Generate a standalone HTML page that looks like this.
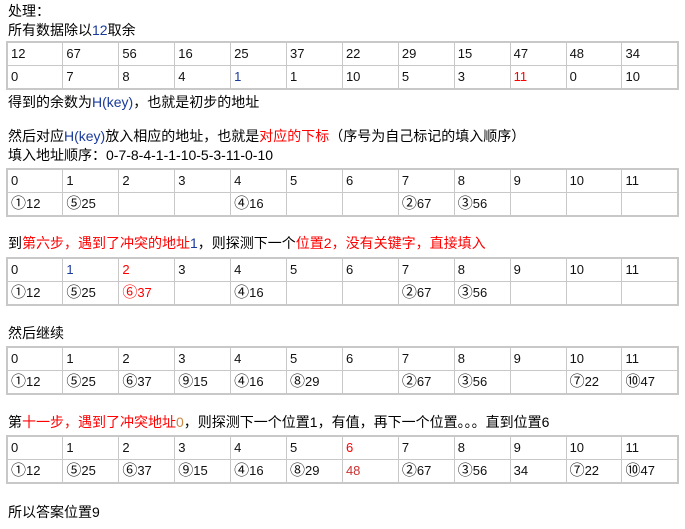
<!DOCTYPE html>
<html><head><meta charset="utf-8"><style>
body{margin:0;background:#fff;width:685px;height:529px;position:relative;overflow:hidden;font-family:"Liberation Sans","Noto Sans CJK SC",sans-serif;font-size:14px;color:#000}
.t{position:absolute;left:8px;white-space:nowrap;line-height:19px}
table{position:absolute;left:6px;border-collapse:collapse;width:673px;table-layout:fixed;border:2px solid #c8c8c8}
td{border:1px solid #c8c8c8;height:22px;padding:0 0 0 3px;font-size:13px;line-height:22px;color:#111}
.c{font-family:"WenQuanYi Zen Hei","Noto Sans CJK SC",sans-serif;font-size:15px;line-height:10px}
.r{color:#f00}.b{color:#1a3a9a}.o{color:#c84}
</style></head><body>
<div class="t" style="top:2px">处理：</div>
<div class="t" style="top:21px">所有数据除以<span class="b">12</span>取余</div>
<table style="top:41px"><tr><td>12</td><td>67</td><td>56</td><td>16</td><td>25</td><td>37</td><td>22</td><td>29</td><td>15</td><td>47</td><td>48</td><td>34</td></tr>
<tr><td>0</td><td>7</td><td>8</td><td>4</td><td class="b">1</td><td>1</td><td>10</td><td>5</td><td>3</td><td class="r">11</td><td>0</td><td>10</td></tr></table>
<div class="t" style="top:93px">得到的余数为<span class="b">H(key)</span>，也就是初步的地址</div>
<div class="t" style="top:127px">然后对应<span class="b">H(key)</span>放入相应的地址，也就是<span class="r">对应的下标</span>（序号为自己标记的填入顺序）</div>
<div class="t" style="top:146px">填入地址顺序：0-7-8-4-1-1-10-5-3-11-0-10</div>
<table style="top:168px"><tr><td>0</td><td>1</td><td>2</td><td>3</td><td>4</td><td>5</td><td>6</td><td>7</td><td>8</td><td>9</td><td>10</td><td>11</td></tr>
<tr><td><span class="c">①</span>12</td><td><span class="c">⑤</span>25</td><td></td><td></td><td><span class="c">④</span>16</td><td></td><td></td><td><span class="c">②</span>67</td><td><span class="c">③</span>56</td><td></td><td></td><td></td></tr></table>
<div class="t" style="top:234px">到<span class="r">第六步，遇到了冲突的地址</span><span class="b">1</span>，则探测下一个<span class="r">位置2，没有关键字，直接填入</span></div>
<table style="top:257px"><tr><td>0</td><td class="b">1</td><td class="r">2</td><td>3</td><td>4</td><td>5</td><td>6</td><td>7</td><td>8</td><td>9</td><td>10</td><td>11</td></tr>
<tr><td><span class="c">①</span>12</td><td><span class="c">⑤</span>25</td><td class="r"><span class="c">⑥</span>37</td><td></td><td><span class="c">④</span>16</td><td></td><td></td><td><span class="c">②</span>67</td><td><span class="c">③</span>56</td><td></td><td></td><td></td></tr></table>
<div class="t" style="top:324px">然后继续</div>
<table style="top:346px"><tr><td>0</td><td>1</td><td>2</td><td>3</td><td>4</td><td>5</td><td>6</td><td>7</td><td>8</td><td>9</td><td>10</td><td>11</td></tr>
<tr><td><span class="c">①</span>12</td><td><span class="c">⑤</span>25</td><td><span class="c">⑥</span>37</td><td><span class="c">⑨</span>15</td><td><span class="c">④</span>16</td><td><span class="c">⑧</span>29</td><td></td><td><span class="c">②</span>67</td><td><span class="c">③</span>56</td><td></td><td><span class="c">⑦</span>22</td><td><span class="c">⑩</span>47</td></tr></table>
<div class="t" style="top:413px">第<span class="r">十一步，遇到了冲突地址</span><span class="o">0</span>，则探测下一个位置1，有值，再下一个位置。。。直到位置6</div>
<table style="top:435px"><tr><td>0</td><td>1</td><td>2</td><td>3</td><td>4</td><td>5</td><td class="r">6</td><td>7</td><td>8</td><td>9</td><td>10</td><td>11</td></tr>
<tr><td><span class="c">①</span>12</td><td><span class="c">⑤</span>25</td><td><span class="c">⑥</span>37</td><td><span class="c">⑨</span>15</td><td><span class="c">④</span>16</td><td><span class="c">⑧</span>29</td><td style="color:#c33">48</td><td><span class="c">②</span>67</td><td><span class="c">③</span>56</td><td>34</td><td><span class="c">⑦</span>22</td><td><span class="c">⑩</span>47</td></tr></table>
<div class="t" style="top:503px">所以答案位置9</div>
</body></html>
